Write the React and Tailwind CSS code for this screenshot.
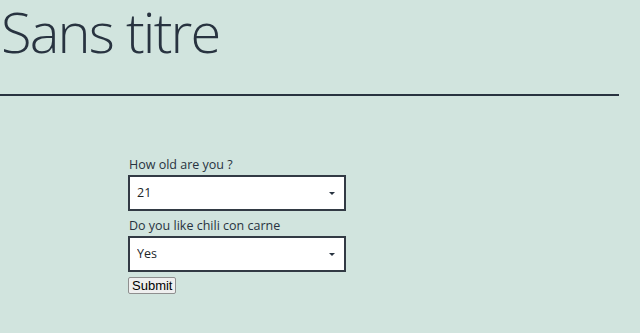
import { useState } from "react";

export default function App() {
  const [age, setAge] = useState("21");
  const [chili, setChili] = useState("Yes");

  return (
    <div className="min-h-[333px] bg-[#d1e4de] text-[#283340] font-['Open_Sans',sans-serif]">
      <h1 className="pl-[1px] text-[56px] font-light leading-[62px] tracking-[-1.8px]">Sans titre</h1>
      <div className="mt-[32px] h-[2px] w-[619px] bg-[#283340]" />

      <form className="ml-[128px] mt-[60px] w-[218px]" onSubmit={(e) => e.preventDefault()}>
        <Field label="How old are you ?" value={age} onChange={setAge} options={["18", "19", "20", "21", "22"]} />
        <div className="mt-[6px]">
          <Field label="Do you like chili con carne" value={chili} onChange={setChili} options={["Yes", "No"]} />
        </div>
        <button
          type="submit"
          className="mt-[5px] h-[17px] border border-[#8f8f8f] bg-[#efefef] px-[3px] text-[13px] leading-[13px] text-black rounded-[2px] font-['Liberation_Sans',sans-serif]"
        >
          Submit
        </button>
      </form>
    </div>
  );
}

// label + select pair
function Field({ label, value, onChange, options }) {
  return (
    <div>
      <div className="pl-[1px] text-[12.5px] leading-[18px]">{label}</div>
      <div className="relative mt-[1px] h-[36px] border-2 border-[#323a44] bg-white">
        <select
          value={value}
          onChange={(e) => onChange(e.target.value)}
          className="h-full w-full appearance-none bg-transparent pl-[7px] text-[12.5px] text-[#212529] outline-none"
        >
          {options.map((o) => (
            <option key={o}>{o}</option>
          ))}
        </select>
        <span className="pointer-events-none absolute right-[9px] top-[15px] h-0 w-0 border-x-[3px] border-t-[3px] border-x-transparent border-t-[#283340]" />
      </div>
    </div>
  );
}
